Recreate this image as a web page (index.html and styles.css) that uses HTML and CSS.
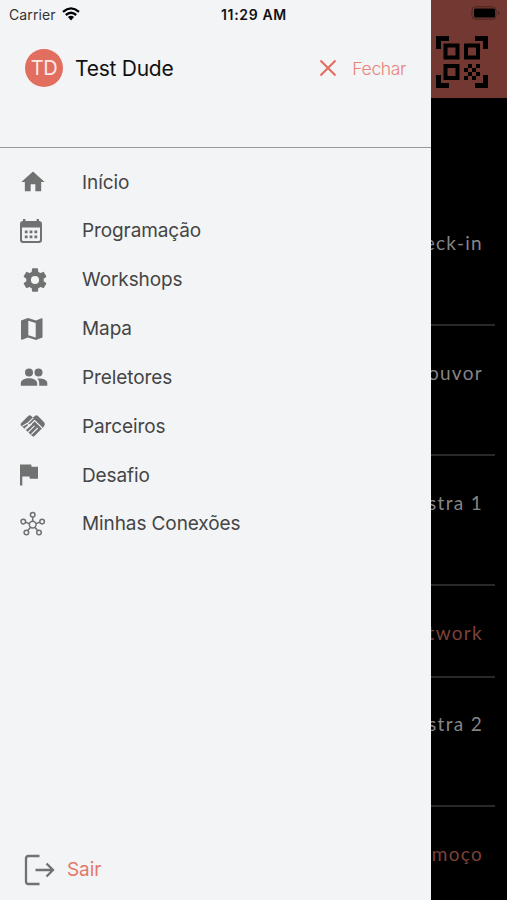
FILE: index.html
```html
<!DOCTYPE html>
<html lang="pt-BR">
<head>
  <meta charset="UTF-8" />
  <title>Menu</title>
  <meta name="viewport" content="width=device-width, initial-scale=1.0" />
  <link rel="stylesheet" href="styles.css">
</head>
<body>
  <div class="screen">
    <!-- Menu lateral -->
    <aside class="drawer">
      <div class="status">
        <span class="carrier">Carrier</span>
        <svg class="wifi" width="18" height="14" viewBox="0 0 18 14">
          <g fill="none" stroke="#000" stroke-width="2.3"><path d="M1 4.8Q9-2 17 4.8" /><path d="M3.8 8Q9 3.6 14.2 8" /></g>
          <path d="M5.9 10.1Q9 7.3 12.1 10.1L9 13.5z" />
        </svg>
        <span class="time">11:29 AM</span>
      </div>

      <header class="profile">
        <span class="avatar">TD</span>
        <span class="name">Test Dude</span>
        <button class="close">
          <svg width="18" height="18" viewBox="0 0 18 18"><path d="M1.5 1.5l15 15M16.5 1.5l-15 15" fill="none" stroke="#e16e5f" stroke-width="2.1" /></svg>
          <span>Fechar</span>
        </button>
      </header>

      <nav class="menu">
        <a class="item">
          <span class="icon"><svg class="home" width="28" height="28" viewBox="0 0 24 24"><path d="M10 20v-6h4v6h5v-8h3L12 3 2 12h3v8z" /></svg></span>
          <span>Início</span>
        </a>
        <a class="item">
          <span class="icon"><svg class="calendar" width="24" height="26" viewBox="0 0 24 26">
            <path fill-rule="evenodd" d="M4 1h2.4v2h11.2V1H20v2q3 0 3 3v16q0 3-3 3H4q-3 0-3-3V6q0-3 3-3zM3 9.5V21.5q0 1.500 1.500 1.500h15q1.500 0 1.500-1.500v-12z" />
            <path d="M5.800 12.400h2.800v2.800H5.800zM10.600 12.400h2.800v2.800h-2.800zM15.400 12.400h2.800v2.800h-2.800zM5.800 17.400h2.800v2.800H5.800zM10.600 17.400h2.800v2.800h-2.800zM15.400 17.400h2.800v2.800h-2.800z" />
          </svg></span>
          <span>Programação</span>
        </a>
        <a class="item">
          <span class="icon"><svg class="gear" width="28" height="28" viewBox="0 0 24 24"><path d="M12 15.5A3.5 3.5 0 0 1 8.5 12 3.5 3.5 0 0 1 12 8.5a3.5 3.5 0 0 1 3.5 3.5 3.5 3.5 0 0 1-3.5 3.5m7.43-2.53c.04-.32.07-.64.07-.97s-.03-.66-.07-1l2.11-1.63c.19-.15.24-.42.12-.64l-2-3.46c-.12-.22-.39-.31-.61-.22l-2.49 1c-.52-.39-1.06-.73-1.69-.98l-.37-2.65A.506.506 0 0 0 14 2h-4c-.25 0-.46.18-.5.42l-.37 2.65c-.63.25-1.17.59-1.69.98l-2.49-1c-.22-.09-.49 0-.61.22l-2 3.46c-.13.22-.07.49.12.64L4.57 11c-.04.34-.07.67-.07 1s.03.65.07.97l-2.11 1.66c-.19.15-.25.42-.12.64l2 3.46c.12.22.39.3.61.22l2.49-1.01c.52.4 1.06.74 1.69.99l.37 2.65c.04.24.25.42.5.42h4c.25 0 .46-.18.5-.42l.37-2.65c.63-.26 1.17-.59 1.69-.99l2.49 1.01c.22.08.49 0 .61-.22l2-3.46c.12-.22.07-.49-.12-.64z" /></svg></span>
          <span>Workshops</span>
        </a>
        <a class="item">
          <span class="icon"><svg width="24" height="24" viewBox="0 0 24 24"><path fill-rule="evenodd" d="M1 3.5L8 1l8 2.500 5.500-2.200q1-.3 1 .7v18.500L16 23l-8-2.500L2 22.800q-1 .2-1-.8zM8.300 3.700v14.600l7.400 2.200V6z" /></svg></span>
          <span>Mapa</span>
        </a>
        <a class="item">
          <span class="icon"><svg width="28" height="20" viewBox="0 0 28 20">
            <circle cx="9" cy="5.4" r="4" /><circle cx="18.5" cy="5.4" r="4" />
            <path d="M.8 18.700v-2.600c0-3.200 4.200-4.900 8.200-4.900s8.200 1.700 8.200 4.900v2.600zM19.200 18.700v-2.600c0-1.800-.8-3.300-2-4.500 4.500-.4 10.100 1 10.100 4.500v2.600z" />
          </svg></span>
          <span>Preletores</span>
        </a>
        <a class="item">
          <span class="icon"><svg width="26" height="24" viewBox="0 0 26 24">
            <path d="M1 9.200L8.200 2q1.400-1.400 3 0L13 3.600l1.800-1.600q1.600-1.400 3.200 0l6.100 6.200q1.800 2 0 4L14.500 22q-1.400 1.200-2.600-.2L1 11.400q-1-1 0-2.200z" />
            <path d="M13.200 3.800L7.400 9.500q1.800 2.400 4.200 0l3-2.900 7.600 7.400M11.700 10L4.800 16.400M14.500 11.800l-6.600 6.500M17.700 14l-6.400 6.400M2.400 12.200l5-3M4.600 14.900l4.700-4" fill="none" stroke="#f3f4f6" stroke-width="1.1" />
          </svg></span>
          <span>Parceiros</span>
        </a>
        <a class="item">
          <span class="icon"><svg class="flag" width="20" height="22" viewBox="0 0 20 22"><path d="M1 .5h11.200l.4 2.300H19v12h-8.100l-.5-2.400H3.300v9H1z" /></svg></span>
          <span>Desafio</span>
        </a>
        <a class="item">
          <span class="icon"><svg width="26" height="26" viewBox="0 0 26 26"><g fill="none" stroke="#707171" stroke-width="1.5">
            <circle cx="12.7" cy="13.6" r="3.4" />
            <circle cx="12.7" cy="3.7" r="2.3" /><circle cx="3.3" cy="10.6" r="2.3" /><circle cx="22.1" cy="10.6" r="2.3" /><circle cx="6.4" cy="21.5" r="2.3" /><circle cx="19" cy="21.5" r="2.3" />
            <path d="M12.700 6v4.200M5.500 11.300l4 1.300M19.900 11.300l-4 1.300M7.800 19.600l2.800-3.300M17.600 19.600l-2.800-3.300" />
          </g></svg></span>
          <span>Minhas Conexões</span>
        </a>
      </nav>

      <a class="logout">
        <svg width="32" height="32" viewBox="0 0 32 32"><path d="M15.500 2H4.500Q2 2 2 4.500v23q0 2.500 2.500 2.500h11M11.500 16h17M22.500 9.500l6.500 6.500-6.500 6.500" fill="none" stroke="#707171" stroke-width="2.3" /></svg>
        <span>Sair</span>
      </a>
    </aside>

    <!-- Agenda ao fundo -->
    <main class="agenda">
      <header class="topbar">
        <svg class="battery" width="31" height="14" viewBox="0 0 31 14"><rect x="6" y=".8" width="24" height="12.400" rx="3.500" fill="none" stroke="#4b251f" transform="translate(-5)" /><rect x="3" y="2.600" width="21" height="8.800" rx="1.500" /><path d="M27 4.700q2.500 2.300 0 4.600z" fill="#4b251f" /></svg>
        <svg class="qr" width="52" height="52" viewBox="0 0 52 52">
          <path d="M0 0h13v5H5v8H0zM39 0h13v13h-5V5h-8zM0 39h5v8h8v5H0zM47 39h5v13H39v-5h8z" />
          <path fill-rule="evenodd" d="M7.500 7.500h16v16h-16zM11.500 11.500v8h8v-8zM28 7.500h16v16H28zM32 11.500v8h8v-8zM7.500 28h16v16h-16zM11.500 32v8h8v-8z" />
          <path d="M32 28h4v4h-4zM28 32h4v4h-4zM36 32h4v4h-4zM40 28h4v4h-4zM32 36h4v4h-4zM40 36h4v4h-4zM28 40h4v4h-4zM36 40h4v4h-4z" />
        </svg>
      </header>
      <ul class="talks">
        <li>eck-in</li>
        <li>ouvor</li>
        <li>stra 1</li>
        <li class="short accent">twork</li>
        <li>stra 2</li>
        <li class="accent">moço</li>
      </ul>
    </main>
  </div>
</body>
</html>
```

FILE: styles.css
```css
* { box-sizing:border-box; }
body { margin:0; font-family:Inter,"Liberation Sans",sans-serif; background:#000; }
svg { display:block; flex:none; }
.screen { display:flex; width:507px; height:900px; overflow:hidden; }

/* Menu lateral */
.drawer { width:431px; height:900px; background:#f3f4f6; display:flex; flex-direction:column; white-space:nowrap; }
.status { height:28px; padding-left:9px; display:flex; align-items:center; font-size:14px; }
.carrier { width:53px; color:#333; letter-spacing:.1px; }
.time { margin-left:141px; font-weight:600; letter-spacing:.65px; color:#111; }

.profile { height:120px; padding:21px 25px 0; display:flex; align-items:flex-start; border-bottom:1px solid #97989a; }
.avatar { width:38px; height:38px; border-radius:50%; background:#e16e5f; color:#fbe9e6; font-size:20px; letter-spacing:-.5px; line-height:38px; text-align:center; }
.name { margin-left:12px; font-size:21px; letter-spacing:-.25px; line-height:39px; color:#111; }
.close { margin-left:auto; padding:0; border:0; background:none; height:38px; display:flex; align-items:center; gap:15px; font-family:inherit; font-size:17.5px; font-weight:300; letter-spacing:-.35px; color:#e98379; }

.menu { padding-top:9.600px; }
.item { height:48.850px; padding-left:20px; display:flex; align-items:center; font-size:19px; letter-spacing:-.1px; color:#454545; }
.icon { width:62px; fill:#707171; }
.home { margin-left:-1px; }
.calendar, .flag { margin-left:-1px; }
.gear { margin-left:1px; }

.logout { margin-top:auto; height:61px; padding-left:24px; display:flex; align-items:center; gap:11px; font-size:19px; letter-spacing:-.1px; color:#e47769; }

/* Agenda */
.agenda { width:76px; background:#000; }
.topbar { height:98px; padding:6px 5px 0; background:#733831; }
.battery { margin-left:35px; }
.qr { margin-top:16px; }
.talks { list-style:none; margin:98px 12px 0 0; padding:0; }
.talks li { height:130px; padding:35px 12px 0 0; display:flex; justify-content:flex-end; overflow:hidden; border-bottom:2px solid #292929; font-family:Lato,sans-serif; font-size:19px; line-height:24px; letter-spacing:1.300px; white-space:nowrap; color:#858585; }
.talks .short { height:92px; }
.talks .short + li { height:129px; padding-top:34px; }
.talks .accent { color:#7c4139; }
.talks li:last-child { border:0; }
```
